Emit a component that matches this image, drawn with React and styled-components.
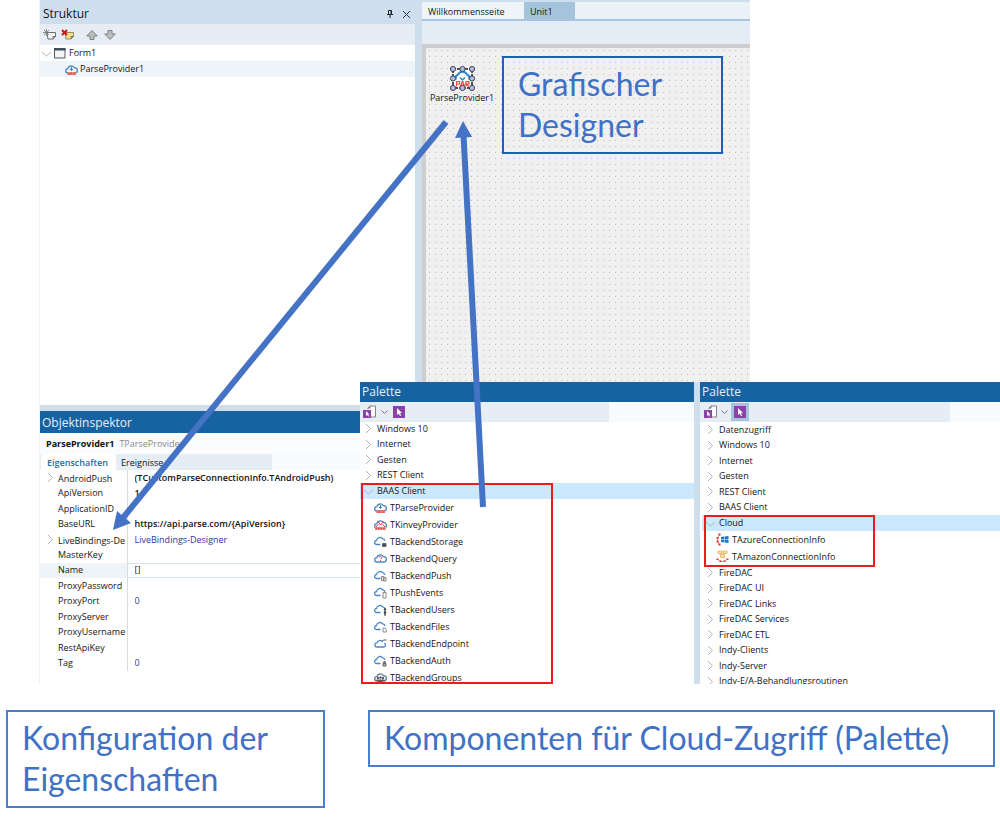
import React from "react";
import styled, { createGlobalStyle } from "styled-components";

const GlobalStyle = createGlobalStyle`
  * { box-sizing: border-box; }
  body {
    margin: 0;
    background: #ffffff;
    color: #141414;
    font-family: "Open Sans", "Noto Sans", sans-serif;
    font-size: 9px;
    line-height: 12px;
  }
  button, input { font: inherit; color: inherit; }
  ul { list-style: none; margin: 0; padding: 0; }
  h1, h2, p { margin: 0; font-weight: 400; }
`;

const Page = styled.main`
  width: 100%;
`;

const Stage = styled.section`
  position: relative;
  display: grid;
  grid-template-columns: 40fr 320fr 55fr minmax(0, 279fr) minmax(0, 56fr) minmax(0, 250fr);
  grid-template-rows: 382px 23px 279px;
`;

const StructurePanel = styled.section`
  grid-column: 2 / 4;
  grid-row: 1 / 3;
  box-shadow: -1px 0 0 #eef1f4;
`;

const StructureHeader = styled.header`
  display: flex;
  align-items: center;
  gap: 4px;
  height: 24px;
  padding: 4px 4px 0 3px;
  background: #cfdeec;
`;

const PanelTitle = styled.h2`
  flex: 1;
  font-size: 12px;
  line-height: 16px;
`;

const IconButton = styled.button`
  display: inline-flex;
  align-items: center;
  justify-content: center;
  width: ${(p) => p.$size || 14}px;
  height: ${(p) => p.$size || 14}px;
  padding: 0;
  border: 0;
  background: ${(p) => (p.$pressed ? "#a6c3dc" : "transparent")};
`;

const StructureTools = styled.div`
  display: flex;
  align-items: center;
  gap: 4px;
  height: 21px;
  padding-left: 3px;
  background: #e6edf4;
`;

const ToolGap = styled.span`
  width: 2px;
`;

const TreeRow = styled.li`
  display: flex;
  align-items: center;
  gap: ${(p) => (p.$level ? 2 : 3)}px;
  height: 16px;
  padding-left: ${(p) => (p.$level ? 25 : 2)}px;
  background: ${(p) => (p.$level ? "#eff4f9" : "#ffffff")};
`;

const Designer = styled.section`
  grid-column: 4 / 6;
  grid-row: 1;
  display: flex;
  flex-direction: column;
  padding-left: 7px;
  padding-top: 2px;
  background: #cfdeec;
`;

const TabStrip = styled.nav`
  display: flex;
  height: 19px;
  background: #eaf1f7;
  border-bottom: 2px solid #a6c5de;
`;

const FileTab = styled.button`
  width: ${(p) => (p.$active ? 51 : 102)}px;
  padding: 2px 0 0 6px;
  border: 0;
  text-align: left;
  background: ${(p) => (p.$active ? "#a6c3dc" : "#eff4f9")};
`;

const DesignerBar = styled.div`
  height: 23px;
  background: #e4edf5;
`;

const Canvas = styled.div`
  flex: 1;
  display: flex;
  align-items: flex-start;
  gap: 4px;
  padding: 8px 27px 0 0;
  border-top: 4px solid #cecece;
  border-left: 4px solid #cecece;
  background-color: #f0f0f0;
  background-image: conic-gradient(from 270deg at 1px 1px, #bdbdbd 90deg, transparent 0);
  background-position: 3px 2px;
  background-size: 6px 6px;
`;

const FormComponent = styled.figure`
  display: flex;
  flex-direction: column;
  align-items: center;
  width: 72px;
  margin: 0;
  padding-top: 9px;
`;

const Note = styled.p`
  flex: ${(p) => p.$flex || "none"};
  padding: 5px 14px 7px;
  border: 2px solid ${(p) => (p.$strong ? "#1f5fbd" : "#4a7ecf")};
  color: #3f71c6;
  font-family: Lato, Inter, sans-serif;
  font-size: 32px;
  line-height: 41px;
`;

const Inspector = styled.section`
  grid-column: 2;
  grid-row: 3;
  border-top: 6px solid #cfdeec;
  box-shadow: -1px 0 0 #eef1f4;
  min-width: 0;
`;

const BlueTitle = styled.h2`
  height: ${(p) => (p.$tall ? 22 : 20)}px;
  padding: ${(p) => (p.$tall ? 4 : 2)}px 2px 0;
  background: #1762a1;
  color: #e6eff7;
  font-size: 12px;
  line-height: 16px;
`;

const ObjectLine = styled.p`
  display: flex;
  align-items: center;
  gap: 5px;
  height: 21px;
  padding-left: 6px;
  background: #fafcfd;
  color: #8d8d8d;
  strong { color: #111111; font-weight: 700; }
`;

const InspectorTabs = styled.div`
  display: flex;
  height: 16px;
  background: #e6edf4;
`;

const InspectorTab = styled.button`
  width: ${(p) => (p.$active ? 75 : 60)}px;
  padding: 2px 0 0 ${(p) => (p.$active ? 6 : 5)}px;
  margin-left: ${(p) => (p.$active ? 1 : 0)}px;
  border: 0;
  text-align: left;
  background: ${(p) => (p.$active ? "#ffffff" : "transparent")};
  color: ${(p) => (p.$active ? "#1b6ea8" : "#141414")};
  font-weight: ${(p) => (p.$active ? 600 : 400)};
`;

const SearchInput = styled.input`
  width: ${(p) => p.$width}px;
  height: 100%;
  margin-left: auto;
  padding: 0 4px;
  border: 0;
  outline: 0;
  background: #f8fbfd;
`;

const PropertyTable = styled.table`
  width: 100%;
  height: 201px;
  border-collapse: collapse;
  table-layout: fixed;
`;

const NameCell = styled.th`
  width: 87px;
  padding: 0;
  border-right: 1px solid #d9dde1;
  background: ${(p) => (p.$current ? "#eff4f9" : "transparent")};
  font-weight: 400;
  text-align: left;
  white-space: nowrap;
  overflow: hidden;
`;

const NameLabel = styled.label`
  display: grid;
  grid-template-columns: 12px auto;
  padding-left: 6px;
  align-items: center;
  height: 12px;
`;

const ValueCell = styled.td`
  padding: 0 0 0 7px;
  box-shadow: ${(p) => (p.$current ? "inset 0 1px 0 #cfe6f7, inset 0 -1px 0 #cfe6f7" : "none")};
`;

const ValueInput = styled.input`
  display: block;
  width: 100%;
  height: 12px;
  padding: 0;
  border: 0;
  outline: 0;
  background: transparent;
  color: ${(p) => (p.$tone === "link" ? "#3434a0" : "#111111")};
  font-weight: ${(p) => (p.$tone === "bold" ? 600 : 400)};
`;

const PalettePanel = styled.section`
  grid-column: ${(p) => p.$column};
  grid-row: 2 / 4;
  z-index: 1;
  min-width: 0;
  overflow: hidden;
  background: #ffffff;
  border-left: ${(p) => (p.$divider ? "6px solid #cfdeec" : "0")};
`;

const PaletteTools = styled.div`
  display: flex;
  align-items: center;
  gap: ${(p) => p.$gap}px;
  height: 20px;
  padding-left: ${(p) => p.$inset}px;
  background: #e6edf4;
`;

const PaletteList = styled.div`
  padding-left: ${(p) => p.$inset}px;
  margin-top: ${(p) => p.$shift || 0}px;
`;

const GroupRows = styled.ul`
  display: grid;
  grid-auto-rows: 1fr;
  height: ${(p) => p.$height}px;
`;

const OpenGroup = styled.div`
  position: relative;
`;

const GroupButton = styled.button`
  display: grid;
  grid-template-columns: 13px auto;
  justify-content: start;
  align-items: center;
  width: 100%;
  height: ${(p) => (p.$open ? "16px" : "100%")};
  padding: 0 0 0 4px;
  border: 0;
  text-align: left;
  background: ${(p) => (p.$open ? "#cce8ff" : "transparent")};
`;

const ComponentRow = styled.li`
  display: flex;
  align-items: center;
  gap: 3px;
  height: 17px;
  padding-left: 14px;
`;

const Highlight = styled.span`
  position: absolute;
  top: ${(p) => p.$top}px;
  bottom: ${(p) => p.$bottom}px;
  left: ${(p) => p.$left}px;
  width: ${(p) => p.$width}px;
  border: 2px solid #ea1c1c;
  pointer-events: none;
`;

const Arrows = styled.svg`
  position: absolute;
  inset: 0;
  z-index: 2;
  width: 100%;
  height: 100%;
  pointer-events: none;
`;

const Captions = styled.footer`
  display: grid;
  grid-template-columns: minmax(0, 319fr) minmax(0, 627fr);
  align-items: start;
  gap: 43px;
  padding: 26px 5px 12px 6px;
`;

const Chevron = ({ open }) => (
  <svg width="9" height="11" viewBox="0 0 9 11" fill="none" stroke="#b4b4b4" aria-hidden="true">
    <path d={open ? "M0 4l4.500 4L9 4" : "M2 1l4.500 4.500L2 10"} />
  </svg>
);

const FULL_CLOUD = "M3 10A2.200 2.200 0 0 1 2.800 5.600 3.600 3.600 0 0 1 9.300 4.600 2.700 2.700 0 0 1 10 10";
const CUT_CLOUD = "M6.500 9.500H2.800A2 2 0 0 1 2.500 5.500 3.600 3.600 0 0 1 8.800 3.800Q10.500 4 11 5.800";

const badges = {
  parse: (
    <g>
      <path d="M6.500 4v3.500M5 6l1.500 1.500L8 6" stroke="#3e7fbd" />
      <path d="M2.500 10.500h8.500" stroke="#e8837d" strokeWidth="3" />
      <path d="M3 10h8M3 11.500h8" stroke="#d9473f" strokeDasharray="1.500 1" strokeWidth=".8" />
    </g>
  ),
  kinvey: (
    <g stroke="#dc4a48">
      <path d="M3.500 3l3 4 3-4M2 9l2.500-3M11 9L8.500 6" />
      <path d="M1 10.500h11" stroke="#ec908d" strokeWidth="3" />
      <path d="M1.500 10.500h10" strokeDasharray="1.500 1" strokeWidth="1.500" />
    </g>
  ),
  storage: <path d="M8.500 8.500h3.500v3h-3.500z" fill="#4c4c4c" stroke="#666" />,
  query: <path d="M5.200 5.600q.3-1.400 1.500-1.200 1.500.4.700 1.800L6.600 7.300M6.500 8v1.200" stroke="#e2564f" />,
  push: <path d="M7.500 7.500h2.500v4H7.500zM9.500 8.500h2.500v3.500H9.500z" fill="#eee" stroke="#888" />,
  events: <path d="M9 6.500h3v5.500H9z" fill="#fff" stroke="#888" />,
  users: (
    <g fill="#3c3c3c">
      <circle cx="11" cy="6.500" r="1.200" />
      <path d="M9.800 8.200h2.400v2h-.5v2.500h-1.400v-2.500h-.5z" />
    </g>
  ),
  files: <path d="M9 8h2l1.200 1.200V12H9z" fill="#fff" stroke="#8c8c8c" />,
  endpoint: <path d="M8 4.500l1.800-1.500h2.700" stroke="#555" />,
  auth: <path d="M9 9.500h3V12H9zM9.800 9.500V7.500h1.500v2" fill="#aaa" stroke="#666" />,
  groups: (
    <g fill="#5b5b5b">
      <circle cx="4" cy="7" r="1.200" />
      <circle cx="6.500" cy="6.500" r="1.200" />
      <circle cx="9" cy="7" r="1.200" />
      <path d="M2.500 8.500h8v2H9V12H4v-1.500H2.500z" />
    </g>
  ),
};

const cutKinds = ["storage", "push", "events", "users", "files", "auth"];

const CloudIcon = ({ kind }) => (
  <svg width="13" height="13" viewBox="0 0 13 13" fill="none" aria-hidden="true">
    {kind === "endpoint" ? (
      <path d="M9 4.800A3.500 3.500 0 0 0 3 5.800 2 2 0 0 0 3 10h6.500a2.200 2.200 0 0 0 1-4" stroke="#4a88c3" strokeWidth="1.300" />
    ) : (
      <path
        d={cutKinds.includes(kind) ? CUT_CLOUD : kind === "query" ? FULL_CLOUD + "z" : FULL_CLOUD}
        stroke={kind === "groups" ? "#5d8297" : "#4a88c3"}
        strokeWidth="1.300"
      />
    )}
    {badges[kind]}
  </svg>
);

const AzureIcon = () => (
  <svg width="13" height="13" viewBox="0 0 13 13" fill="none" aria-hidden="true">
    <path d="M3.500 1.500Q0 6.500 3.500 11.500" stroke="#e08a84" />
    <path d="M2.500 .500h2v2h-2zM.500 4h1.800v2H.500zM.500 7.500h1.800v2H.500zM2.500 10.500h2v2h-2z" fill="#d8332b" />
    <path d="M5 4l3-.500v2.700H5zM8.500 3.500l4-.500v3.200h-4zM5 6.800h3v2.700L5 9zM8.500 6.800h4V10l-4-.500z" fill="#1c78c0" />
  </svg>
);

const AmazonIcon = () => (
  <svg width="13" height="13" viewBox="0 0 13 13" fill="none" aria-hidden="true">
    <path d="M2 1h4v2.500H2zM7 1h4v2.500H7zM4.500 4.500h4v3h-4z" fill="#f6dfae" stroke="#e6bd6d" />
    <path d="M1.500 9.500q5 4 10 0" stroke="#eda59e" />
    <path d="M.500 8.500h2v1.500h-2zM3.500 10.500h2V12h-2zM7.500 10.500h2V12h-2zM10.500 8.500h2v1.500h-2z" fill="#d8332b" />
  </svg>
);

const NewItemIcon = ({ remove }) => (
  <svg width="14" height="12" viewBox="0 0 14 12" fill="none" aria-hidden="true">
    <path d="M4 3.500h8.500v4L10 10H5z" fill={remove ? "#f6dd94" : "#f7f7f7"} stroke={remove ? "#a08a55" : "#6c6c6c"} />
    <path d="M12.500 7.500H10V10" stroke="#686868" />
    {remove ? (
      <path d="M1 1l5 5M6 1L1 6" stroke="#d31414" strokeWidth="2" />
    ) : (
      <path d="M3.500 0v7M0 3.500h7M1 1l5 5M6 1L1 6" stroke="#777" strokeWidth=".8" />
    )}
  </svg>
);

const MoveIcon = ({ down }) => (
  <svg width="12" height="12" viewBox="0 0 12 12" aria-hidden="true">
    <path
      d={down ? "M4 1.500h4v3.500h3.300L6 10.500.700 5H4z" : "M6 1.500L11.300 7H8v3.500H4V7H.700z"}
      fill="#bdbdbd"
      stroke="#808080"
    />
  </svg>
);

const FormIcon = () => (
  <svg width="12" height="12" viewBox="0 0 12 12" aria-hidden="true">
    <path d="M.5 1.500h10.500v9.500H.5z" fill="#f3f3f3" stroke="#505b66" />
    <path d="M0 1h11.500v2.500H0z" fill="#3e4e60" />
  </svg>
);

const PinIcon = () => (
  <svg width="8" height="10" viewBox="0 0 8 10" fill="none" stroke="#222" aria-hidden="true">
    <path d="M2.500 1.500h3v4h-3zM5 1.500v4M1 5.500h6M4 6v3" />
  </svg>
);

const CloseIcon = () => (
  <svg width="9" height="9" viewBox="0 0 9 9" fill="none" stroke="#333" aria-hidden="true">
    <path d="M1 1l7 7M8 1L1 8" />
  </svg>
);

const CursorGlyph = "M0 0v7l1.700-1.500L3 8l1.200-.600L3 5h2z";

const PageCursorIcon = () => (
  <svg width="14" height="14" viewBox="0 0 14 14" aria-hidden="true">
    <path d="M5 4V3l2-2h5.500v11H8" fill="#fbfbfb" stroke="#858585" />
    <path d="M4.500 3.500L7.500 .500v3z" fill="#858585" />
    <path d="M0 5h8v8H0z" fill="#8843a5" />
    <path d={CursorGlyph} transform="translate(3 6) scale(.7)" fill="#fff" />
  </svg>
);

const CursorIcon = () => (
  <svg width="12" height="12" viewBox="0 0 12 12" aria-hidden="true">
    <path d="M0 0h12v12H0z" fill="#8843a5" />
    <path d={CursorGlyph} transform="translate(4 2)" fill="#fff" />
  </svg>
);

const DropIcon = () => (
  <svg width="7" height="5" viewBox="0 0 7 5" fill="none" stroke="#777" aria-hidden="true">
    <path d="M.500 .500l3 3 3-3" />
  </svg>
);

const SelectedComponentIcon = () => (
  <svg width="27" height="27" viewBox="0 0 27 27" fill="none" aria-hidden="true">
    <path d="M4 4h19v19H4z" fill="#fff" stroke="#1b1b1b" strokeWidth="1.500" strokeDasharray="3 1" />
    <path d="M7 14.500a4 4 0 0 1 2-5 5 5 0 0 1 9 0 4 4 0 0 1 2 5" stroke="#2e86d0" strokeWidth="2" />
    <path d="M11 12.500l2.500 2.500L16 12.500" stroke="#2e86d0" strokeWidth="1.500" />
    <path d="M7.500 21.500v-5h3V19h-3M11.500 21.500l1.700-5h.6l1.700 5M12 20h3M17 21.500v-5h3V19h-3l3 2.500" stroke="#ec4a3d" strokeWidth="1.200" />
    {[4, 13.5, 23].map((x) =>
      [4, 13.5, 23].map((y) =>
        x === 13.5 && y === 13.5 ? null : (
          <circle key={`${x}-${y}`} cx={x} cy={y} r="2.600" fill="#b6bdd8" stroke="#3f4560" />
        )
      )
    )}
  </svg>
);

const properties = [
  { name: "AndroidPush", value: "(TCustomParseConnectionInfo.TAndroidPush)", tone: "bold", expandable: true },
  { name: "ApiVersion", value: "1", tone: "bold" },
  { name: "ApplicationID", value: "" },
  { name: "BaseURL", value: "https://api.parse.com/{ApiVersion}", tone: "bold" },
  { name: "LiveBindings-De", value: "LiveBindings-Designer", tone: "link", expandable: true },
  { name: "MasterKey", value: "" },
  { name: "Name", value: "[]", current: true },
  { name: "ProxyPassword", value: "" },
  { name: "ProxyPort", value: "0", tone: "link" },
  { name: "ProxyServer", value: "" },
  { name: "ProxyUsername", value: "" },
  { name: "RestApiKey", value: "" },
  { name: "Tag", value: "0", tone: "link" },
];

const baasComponents = [
  ["TParseProvider", "parse"],
  ["TKinveyProvider", "kinvey"],
  ["TBackendStorage", "storage"],
  ["TBackendQuery", "query"],
  ["TBackendPush", "push"],
  ["TPushEvents", "events"],
  ["TBackendUsers", "users"],
  ["TBackendFiles", "files"],
  ["TBackendEndpoint", "endpoint"],
  ["TBackendAuth", "auth"],
  ["TBackendGroups", "groups"],
];

const groupsBeforeBaas = ["Windows 10", "Internet", "Gesten", "REST Client"];
const groupsBeforeCloud = ["Datenzugriff", "Windows 10", "Internet", "Gesten", "REST Client", "BAAS Client"];
const groupsAfterCloud = [
  "FireDAC",
  "FireDAC UI",
  "FireDAC Links",
  "FireDAC Services",
  "FireDAC ETL",
  "Indy-Clients",
  "Indy-Server",
  "Indy-E/A-Behandlungsroutinen",
];

const ClosedGroups = ({ names, height }) => (
  <GroupRows $height={height}>
    {names.map((name) => (
      <li key={name}>
        <GroupButton aria-expanded="false">
          <Chevron />
          {name}
        </GroupButton>
      </li>
    ))}
  </GroupRows>
);

export default function App() {
  return (
    <Page>
      <GlobalStyle />
      <Stage>
        <StructurePanel>
          <StructureHeader>
            <PanelTitle>Struktur</PanelTitle>
            <IconButton aria-label="Anheften"><PinIcon /></IconButton>
            <IconButton $size={10} aria-label="Schließen"><CloseIcon /></IconButton>
          </StructureHeader>
          <StructureTools>
            <IconButton aria-label="Neu"><NewItemIcon /></IconButton>
            <IconButton aria-label="Löschen"><NewItemIcon remove /></IconButton>
            <ToolGap />
            <IconButton aria-label="Nach oben"><MoveIcon /></IconButton>
            <IconButton aria-label="Nach unten"><MoveIcon down /></IconButton>
          </StructureTools>
          <ul>
            <TreeRow><Chevron open /><FormIcon />Form1</TreeRow>
            <TreeRow $level={1}><CloudIcon kind="parse" />ParseProvider1</TreeRow>
          </ul>
        </StructurePanel>

        <Designer>
          <TabStrip>
            <FileTab>Willkommensseite</FileTab>
            <FileTab $active>Unit1</FileTab>
          </TabStrip>
          <DesignerBar />
          <Canvas>
            <FormComponent>
              <SelectedComponentIcon />
              <figcaption>ParseProvider1</figcaption>
            </FormComponent>
            <Note $strong $flex="1">Grafischer Designer</Note>
          </Canvas>
        </Designer>

        <Inspector>
          <BlueTitle $tall>Objektinspektor</BlueTitle>
          <ObjectLine><strong>ParseProvider1</strong>TParseProvider</ObjectLine>
          <InspectorTabs>
            <InspectorTab $active>Eigenschaften</InspectorTab>
            <InspectorTab>Ereignisse</InspectorTab>
            <SearchInput $width={88} aria-label="Eigenschaft suchen" />
          </InspectorTabs>
          <PropertyTable>
            <tbody>
              {properties.map((p) => (
                <tr key={p.name}>
                  <NameCell scope="row" $current={p.current}>
                    <NameLabel htmlFor={p.name}>
                      <span>{p.expandable && <Chevron />}</span>
                      {p.name}
                    </NameLabel>
                  </NameCell>
                  <ValueCell $current={p.current}>
                    <ValueInput id={p.name} defaultValue={p.value} $tone={p.tone} />
                  </ValueCell>
                </tr>
              ))}
            </tbody>
          </PropertyTable>
        </Inspector>

        <PalettePanel $column="3 / 5">
          <BlueTitle>Palette</BlueTitle>
          <PaletteTools $gap={4} $inset={3}>
            <IconButton aria-label="Kategorie"><PageCursorIcon /></IconButton>
            <DropIcon />
            <IconButton aria-label="Auswahl"><CursorIcon /></IconButton>
            <SearchInput $width={85} aria-label="Palette durchsuchen" />
          </PaletteTools>
          <PaletteList $inset={0} $shift={-1}>
            <ClosedGroups names={groupsBeforeBaas} height={62} />
            <OpenGroup>
              <GroupButton $open aria-expanded="true"><Chevron open />BAAS Client</GroupButton>
              <ul>
                {baasComponents.map(([name, kind]) => (
                  <ComponentRow key={name}><CloudIcon kind={kind} />{name}</ComponentRow>
                ))}
              </ul>
              <Highlight $top={0} $bottom={2} $left={1} $width={192} />
            </OpenGroup>
          </PaletteList>
        </PalettePanel>

        <PalettePanel $column="5 / 7" $divider>
          <BlueTitle>Palette</BlueTitle>
          <PaletteTools $gap={3} $inset={4}>
            <IconButton aria-label="Kategorie"><PageCursorIcon /></IconButton>
            <DropIcon />
            <IconButton $size={18} $pressed aria-label="Auswahl"><CursorIcon /></IconButton>
            <SearchInput $width={50} aria-label="Palette durchsuchen" />
          </PaletteTools>
          <PaletteList $inset={2}>
            <ClosedGroups names={groupsBeforeCloud} height={93} />
            <OpenGroup>
              <GroupButton $open aria-expanded="true"><Chevron open />Cloud</GroupButton>
              <ul>
                <ComponentRow><AzureIcon />TAzureConnectionInfo</ComponentRow>
                <ComponentRow><AmazonIcon />TAmazonConnectionInfo</ComponentRow>
              </ul>
              <Highlight $top={0} $bottom={-2} $left={2} $width={171} />
            </OpenGroup>
            <ClosedGroups names={groupsAfterCloud} height={124} />
          </PaletteList>
        </PalettePanel>

        <Arrows viewBox="0 0 1000 684" preserveAspectRatio="none" aria-hidden="true">
          <path d="M446 122L122 519" stroke="#4472c4" strokeWidth="6" />
          <path d="M113 530L117 511L131 523z" fill="#4472c4" />
          <path d="M483 507L463.500 135" stroke="#4472c4" strokeWidth="6" />
          <path d="M463 121L455 138L472 137z" fill="#4472c4" />
        </Arrows>
      </Stage>

      <Captions>
        <Note>Konfiguration der Eigenschaften</Note>
        <Note>Komponenten für Cloud-Zugriff (Palette)</Note>
      </Captions>
    </Page>
  );
}
